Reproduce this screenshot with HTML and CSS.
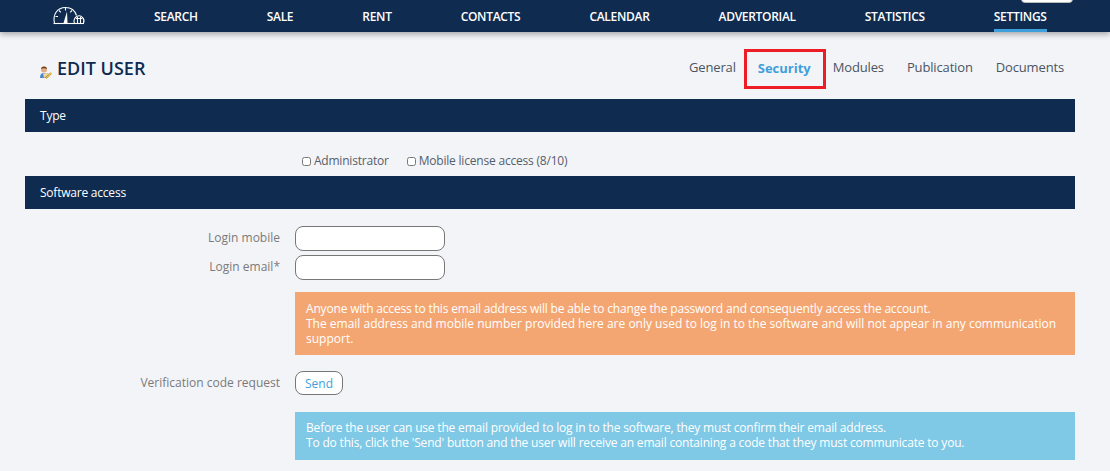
FILE: index.html
```html
<!DOCTYPE html>
<html lang="en">
<head>
  <meta charset="UTF-8">
  <title>Edit user</title>
  <link rel="stylesheet" href="styles.css">
</head>
<body>
  <header class="topbar">
    <div class="logo">
      <svg width="34" height="20" viewBox="0 0 34 20" fill="none" stroke="#fff" stroke-width="1.100">
        <path d="M2.500 17C.500 9 5 1.500 13.500 1.500c5.500 0 9.500 3 11 8"/>
        <path d="M1.500 17.500H32"/>
        <path d="M13.500 2v2.500M7 4.500l1.800 1.800M3.500 10.500h2.500M20 4.500l-1.800 1.800"/>
        <path d="M11.500 17L15 5.500l.500 11.500z" fill="#fff" stroke="none"/>
        <path d="M22.500 17c-1-1.500-.500-4.500 1.500-6 2.200-1.600 4.800-1.600 6.500.500 1.500 1.500 1.700 4 1 5.500"/>
        <path d="M25.500 11v6M28.500 11v6M24 12.500h6"/>
      </svg>
    </div>
    <nav class="mainnav">
      <a href="#">SEARCH</a>
      <a href="#">SALE</a>
      <a href="#">RENT</a>
      <a href="#">CONTACTS</a>
      <a href="#">CALENDAR</a>
      <a href="#">ADVERTORIAL</a>
      <a href="#">STATISTICS</a>
      <a href="#" class="active">SETTINGS</a>
    </nav>
    <div class="topbar-tab"></div>
  </header>

  <main class="page">
    <div class="page-head">
      <h1>
        <svg class="user-icon" width="13" height="14" viewBox="0 0 13 14">
          <path d="M1 13c0-3 1-4.500 3-5l4 0c1 .5 2 1 2 2l-2 3z" fill="#4f86c6"/>
          <path d="M4 8.500l4-.500 1.500 1.500L5 13z" fill="#f2d9a0"/>
          <circle cx="5" cy="4.500" r="3" fill="#e2ab80"/>
          <path d="M2 4C2.500 .8 7.500 .8 8 4 6.500 3 3.500 3 2 4z" fill="#6d4424"/>
          <path d="M6.500 12.500l5-5 1.200 1.200-5 5z" fill="#efbd3c" stroke="#a87a20" stroke-width=".4"/>
        </svg>
        <span>EDIT USER</span>
      </h1>
      <nav class="tabs">
        <a href="#">General</a>
        <a href="#" class="current">Security</a>
        <a href="#">Modules</a>
        <a href="#">Publication</a>
        <a href="#">Documents</a>
      </nav>
    </div>

    <h2 class="section-bar">Type</h2>
    <div class="checks">
      <label><input type="checkbox"> Administrator</label>
      <label><input type="checkbox"> Mobile license access (8/10)</label>
    </div>

    <h2 class="section-bar">Software access</h2>
    <div class="form">
      <div class="row">
        <label class="row-label">Login mobile</label>
        <input type="text" class="field">
      </div>
      <div class="row">
        <label class="row-label">Login email*</label>
        <input type="text" class="field">
      </div>
      <div class="notice orange">
        Anyone with access to this email address will be able to change the password and consequently access the account.<br>
        <span class="wide">The email address and mobile number provided here are only used to log in to the software and will not appear in any communication support.</span>
      </div>
      <div class="row row-send">
        <label class="row-label">Verification code request</label>
        <button class="send">Send</button>
      </div>
      <div class="notice blue">
        Before the user can use the email provided to log in to the software, they must confirm their email address.<br>
        To do this, click the 'Send' button and the user will receive an email containing a code that they must communicate to you.
      </div>
    </div>
  </main>
</body>
</html>
```

FILE: styles.css
```css
* {
  box-sizing: border-box;
  font-family: "Open Sans", sans-serif;
}

html, body {
  height: 471px;
  overflow: hidden;
}

body {
  margin: 0;
  background: #f3f4f7;
  color: #7a7a7a;
  font-size: 12px;
}

a {
  text-decoration: none;
}

/* top navigation */
.topbar {
  position: relative;
  display: flex;
  height: 32px;
  background: #0f2b50;
  box-shadow: 0 2px 6px rgba(0, 0, 0, 0.35);
}

.logo {
  width: 120px;
  padding: 6px 0 0 52px;
}

.logo svg {
  display: block;
}

.mainnav {
  display: flex;
  gap: 69px;
  padding-left: 34px;
}

.mainnav a {
  display: block;
  height: 32px;
  padding-top: 8px;
  color: #fff;
  font-size: 12px;
  font-weight: 600;
  letter-spacing: -0.3px;
}

.mainnav a.active {
  border-bottom: 3px solid #3f9fdb;
}

.topbar-tab {
  position: absolute;
  top: -4px;
  left: 1021px;
  width: 52px;
  height: 7px;
  background: #fff;
  border-radius: 0 0 4px 4px;
  border: 1px solid #bbb;
}

/* page */
.page {
  padding: 0 35px 0 25px;
}

.page-head {
  display: flex;
  justify-content: space-between;
  height: 67px;
}

h1 {
  display: flex;
  align-items: flex-end;
  gap: 5px;
  height: 49px;
  margin: 0;
  padding-left: 14px;
  color: #0f2b50;
  font-size: 18px;
  font-weight: 600;
  line-height: 25px;
}

.user-icon {
  margin-bottom: 2px;
}

.tabs {
  display: flex;
  align-items: flex-start;
  height: 40px;
  margin-top: 17px;
  padding-right: 11px;
}

.tabs a {
  color: #4a5563;
  font-size: 13px;
  line-height: 36px;
  letter-spacing: -0.15px;
  margin-left: 23px;
}

.tabs a.current {
  margin: 0 7px 0 8px;
  padding: 0 12px 0 11px;
  height: 40px;
  line-height: 32px;
  border: 3px solid #ee1c25;
  color: #3f9fdb;
  font-weight: 700;
  letter-spacing: 0;
}

.tabs a.current + a {
  margin-left: 0;
}

.section-bar {
  margin: 0;
  height: 33px;
  padding-left: 15px;
  background: #0f2b50;
  color: #fff;
  font-size: 12px;
  font-weight: 400;
  letter-spacing: -0.22px;
  line-height: 33px;
}

.checks {
  display: flex;
  gap: 18px;
  height: 44px;
  padding: 20px 0 0 277px;
  color: #555e6b;
  line-height: 17px;
  letter-spacing: -0.2px;
}

.checks input {
  width: 9px;
  height: 9px;
  margin: 0;
  vertical-align: -1px;
}

/* form rows */
.form {
  padding-top: 17px;
}

.row {
  display: flex;
  align-items: center;
  height: 25px;
  margin-bottom: 4px;
}

.row-label {
  width: 255px;
  padding-bottom: 3px;
  text-align: right;
}

.field {
  width: 150px;
  height: 25px;
  margin-left: 15px;
  border: 1px solid #777;
  border-radius: 8px;
  background: #fff;
}

.notice {
  margin-left: 270px;
  padding: 9px 11px;
  color: #fff;
  line-height: 15px;
  letter-spacing: -0.18px;
}

.notice .wide {
  letter-spacing: 0;
}

.orange {
  margin-top: 12px;
  height: 63px;
  background: #f4a672;
}

.blue {
  margin-top: 17px;
  height: 48px;
  padding-top: 8px;
  background: #7fc8e6;
}

.row-send {
  height: 24px;
  margin: 16px 0 0;
}

.row-send .row-label {
  padding-bottom: 1px;
}

.send {
  width: 48px;
  height: 24px;
  margin-left: 15px;
  padding: 0;
  border: 1px solid #777;
  border-radius: 8px;
  background: #fff;
  color: #3f9fdb;
  font-size: 12px;
}
```
